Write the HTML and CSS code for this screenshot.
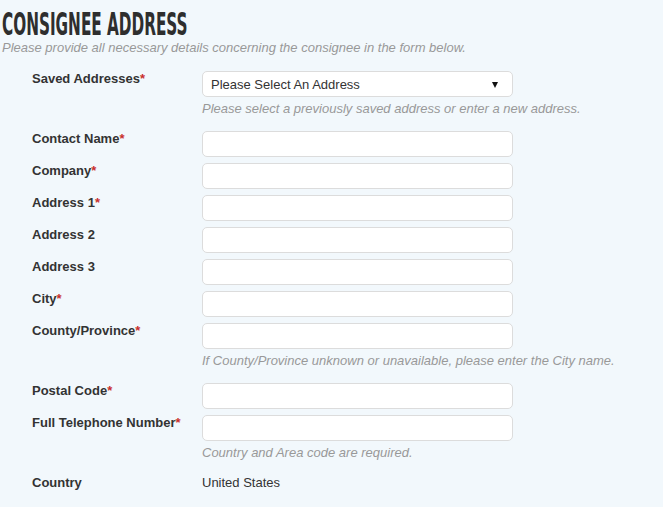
FILE: index.html
```html
<!DOCTYPE html>
<html>
<head>
<meta charset="utf-8">
<link rel="stylesheet" href="styles.css">
</head>
<body>
<div class="page">
  <h1 class="title"><span class="title-text">Consignee Address</span></h1>
  <p class="subtitle">Please provide all necessary details concerning the consignee in the form below.</p>
  <div class="form">
    <div class="row">
      <div class="label">Saved Addresses<span class="req">*</span></div>
      <div class="field">
        <div class="select-wrap">
          <select class="select"><option>Please Select An Address</option></select>
          <span class="caret"></span>
        </div>
        <div class="help">Please select a previously saved address or enter a new address.</div>
      </div>
    </div>
    <div class="row">
      <div class="label">Contact Name<span class="req">*</span></div>
      <div class="field"><input class="input" type="text"></div>
    </div>
    <div class="row">
      <div class="label">Company<span class="req">*</span></div>
      <div class="field"><input class="input" type="text"></div>
    </div>
    <div class="row">
      <div class="label">Address 1<span class="req">*</span></div>
      <div class="field"><input class="input" type="text"></div>
    </div>
    <div class="row">
      <div class="label">Address 2</div>
      <div class="field"><input class="input" type="text"></div>
    </div>
    <div class="row">
      <div class="label">Address 3</div>
      <div class="field"><input class="input" type="text"></div>
    </div>
    <div class="row">
      <div class="label">City<span class="req">*</span></div>
      <div class="field"><input class="input" type="text"></div>
    </div>
    <div class="row">
      <div class="label">County/Province<span class="req">*</span></div>
      <div class="field">
        <input class="input" type="text">
        <div class="help">If County/Province unknown or unavailable, please enter the City name.</div>
      </div>
    </div>
    <div class="row">
      <div class="label">Postal Code<span class="req">*</span></div>
      <div class="field"><input class="input" type="text"></div>
    </div>
    <div class="row">
      <div class="label">Full Telephone Number<span class="req">*</span></div>
      <div class="field">
        <input class="input" type="text">
        <div class="help">Country and Area code are required.</div>
      </div>
    </div>
    <div class="row row-static">
      <div class="label">Country</div>
      <div class="field static">United States</div>
    </div>
  </div>
</div>
</body>
</html>
```

FILE: styles.css
```css
html, body {
  margin: 0;
  padding: 0;
  background: #f2f8fc;
}
body {
  font-family: "Liberation Sans", Arial, sans-serif;
  font-size: 13px;
  color: #333;
}
.page {
  padding-left: 2px;
  width: 661px;
  height: 507px;
  overflow: hidden;
}
.title {
  margin: 9px 0 0 0;
  font-family: "DejaVu Sans Condensed", "Liberation Sans Narrow", sans-serif;
  font-weight: bold;
  font-size: 32px;
  line-height: 31px;
  height: 31px;
  color: #2e2e2e;
  text-transform: uppercase;
  white-space: nowrap;
}
.title-text {
  display: inline-block;
  transform: scaleX(0.53);
  transform-origin: left center;
}
.subtitle {
  margin: 0;
  font-style: italic;
  font-size: 13px;
  line-height: 16px;
  color: #999;
}
.form {
  margin-top: 15px;
  padding-left: 30px;
  display: flex;
  flex-direction: column;
  gap: 6px;
}
.row {
  display: grid;
  grid-template-columns: 170px 311px;
}
.label {
  font-weight: bold;
  line-height: 14px;
  padding-top: 1px;
  color: #333;
  white-space: nowrap;
}
.req {
  color: #c9302c;
  font-weight: bold;
}
.field {
  display: flex;
  flex-direction: column;
}
.input, .select {
  box-sizing: border-box;
  width: 311px;
  height: 26px;
  margin: 0;
  border: 1px solid #dcdcdc;
  border-radius: 5px;
  background: #fff;
  font-family: "Liberation Sans", Arial, sans-serif;
  font-size: 13px;
  color: #333;
  outline: none;
}
.select {
  -webkit-appearance: none;
  appearance: none;
  padding: 0 24px 0 8px;
}
.select-wrap {
  position: relative;
  width: 311px;
  height: 26px;
}
.caret {
  position: absolute;
  right: 15px;
  top: 11px;
  width: 0;
  height: 0;
  border-left: 3.5px solid transparent;
  border-right: 3.5px solid transparent;
  border-top: 6px solid #111;
}
.help {
  margin: 3.5px 0 8.5px 0;
  font-style: italic;
  line-height: 16px;
  color: #999;
  white-space: nowrap;
}
.row-static .label {
  line-height: 16px;
  padding-top: 0;
}
.static {
  line-height: 16px;
}
```
